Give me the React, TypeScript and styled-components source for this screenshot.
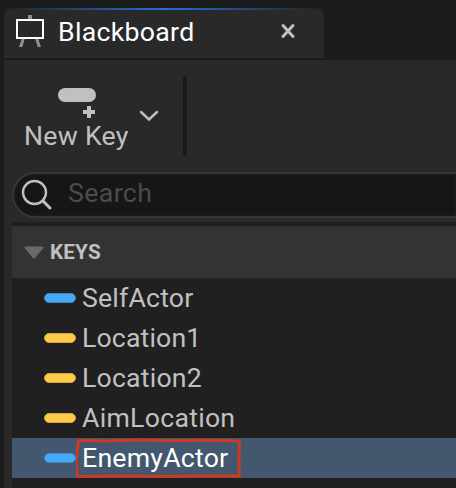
import React from "react";
import styled, { createGlobalStyle } from "styled-components";

const GlobalStyle = createGlobalStyle`
  * { box-sizing: border-box; }
  body { margin: 0; background: #1c1c1c; overflow: hidden; }
`;

const Window = styled.main`
  width: 456px;
  height: 488px;
  padding: 8px 0 0 4px;
  display: flex;
  flex-direction: column;
  overflow: hidden;
  background: #1c1c1c;
  color: #c0c0c0;
  font: 400 26.67px/40px Roboto, sans-serif;
`;

const Tab = styled.header`
  flex: none;
  width: 320px;
  height: 50px;
  margin-bottom: 2px;
  padding: 0 28px 2px 11px;
  display: flex;
  align-items: center;
  border-radius: 8px 8px 0 0;
  background:
    linear-gradient(90deg, #242424 1%, #1d4468 20%, #2a6cd6 50%, #1d4468 80%, #242424 98%) top / 100% 2px no-repeat,
    #292929;
  color: #fff;
`;

const BoardIcon = styled.svg`
  flex: none;
  margin-bottom: 4px;
`;

const Label = styled.span<{ $spacing?: number }>`
  white-space: nowrap;
  letter-spacing: ${(p) => p.$spacing ?? 0}px;
`;

const TabTitle = styled(Label)`
  flex: 1;
  margin-left: 13px;
`;

const IconButton = styled.button`
  display: flex;
  padding: 0;
  border: 0;
  background: none;
  color: #c0c0c0;
`;

const CloseButton = styled(IconButton)`
  margin-bottom: 3px;
`;

const Panel = styled.section`
  flex: 1;
  padding-left: 8px;
  display: flex;
  flex-direction: column;
  background: #292929;
`;

const Toolbar = styled.div`
  flex: none;
  height: 112px;
  padding: 16px 0 16px 12px;
  display: flex;
  align-items: stretch;
`;

const NewKey = styled.button`
  width: 105px;
  padding: 12px 0 0;
  display: flex;
  flex-direction: column;
  align-items: flex-start;
  border: 0;
  background: none;
  color: inherit;
  font: inherit;
  line-height: 36px;

  svg { margin-left: 33px; flex: none; }
`;

const Chevron = styled(IconButton)`
  margin-left: 10px;
  align-items: center;
`;

const Divider = styled.div`
  width: 4px;
  margin-left: 24px;
  background: #1b1b1b;
`;

const SearchBox = styled.label`
  flex: none;
  height: 46px;
  padding: 0 0 4px 7px;
  display: flex;
  align-items: center;
  border: 2px solid #363636;
  border-right: 0;
  border-radius: 23px 0 0 23px;
  background: #161616;
  box-shadow: inset 0 0 0 1px #1c1c1c;
  color: #4b4b4b;

  svg { margin: 4px 15px 0 0; }
`;

const Tree = styled.div`
  flex: 1;
  margin-top: 4px;
  border-top: 4px solid #1f1f1f;
  background: #202020;
`;

const TreeHeader = styled.div`
  height: 52px;
  padding-left: 12px;
  display: flex;
  align-items: center;
  gap: 6px;
  background: #333;
  font-size: 20.7px;
  font-weight: 700;
`;

const Row = styled.div<{ $selected?: boolean }>`
  position: relative;
  height: 40px;
  padding-left: 32px;
  display: flex;
  align-items: center;
  gap: 6px;
  background: ${(p) => (p.$selected ? "#43586e" : "transparent")};
  color: ${(p) => (p.$selected ? "#fff" : "#c0c0c0")};
`;

const Pill = styled.i<{ $color: string; $edge: string }>`
  width: 32px;
  height: 10px;
  border: 1px solid ${(p) => p.$edge};
  border-radius: 5px;
  background: ${(p) => p.$color};
`;

const Annotation = styled.svg`
  position: absolute;
  left: 64px;
  top: 0;
`;

const blue = { $color: "#48a7f7", $edge: "#3c88c8" };
const gold = { $color: "#ffca47", $edge: "#cfa53d" };

const keys = [
  { name: "SelfActor", pill: blue, spacing: 0.18 },
  { name: "Location1", pill: gold, spacing: 0.15 },
  { name: "Location2", pill: gold, spacing: 0.2 },
  { name: "AimLocation", pill: gold, spacing: 0.27 },
  { name: "EnemyActor", pill: blue, spacing: 0.23, selected: true },
];

export default function App() {
  return (
    <Window>
      <GlobalStyle />
      <Tab>
        <BoardIcon width="30" height="34" viewBox="0 0 30 34">
          <path d="M13 2h4v4h-4zM6.700 26H9.700L7.300 34H4zM20.300 26H23.300L26 34H22.700z" fill="#8f8f8f" />
          <rect x="2" y="7" width="26" height="18" fill="none" stroke="#fff" strokeWidth="2" />
        </BoardIcon>
        <TabTitle $spacing={0.3}>Blackboard</TabTitle>
        <CloseButton aria-label="Close">
          <svg width="16" height="16" viewBox="0 0 16 16">
            <path d="M3 2.500l10 11M13 2.500L3 13.500" stroke="#c0c0c0" strokeWidth="3" strokeLinecap="round" />
          </svg>
        </CloseButton>
      </Tab>
      <Panel>
        <Toolbar>
          <NewKey>
            <svg width="40" height="30" viewBox="0 0 40 30">
              <rect x="1" y="0" width="38" height="14" rx="7" fill="#c0c0c0" />
              <path d="M30 18h4v4h4v4h-4v4h-4v-4h-4v-4h4z" fill="#c0c0c0" />
            </svg>
            <Label $spacing={0.28}>New Key</Label>
          </NewKey>
          <Chevron aria-label="More key options">
            <svg width="20" height="12" viewBox="0 0 20 12">
              <path d="M2 2l8 7.5L18 2" fill="none" stroke="#c0c0c0" strokeWidth="2.4" strokeLinecap="round" />
            </svg>
          </Chevron>
          <Divider />
        </Toolbar>
        <SearchBox>
          <svg width="32" height="32" viewBox="0 0 32 32" fill="none" stroke="#c0c0c0" strokeLinecap="round">
            <circle cx="13.5" cy="13.5" r="11.5" strokeWidth="2.4" />
            <path d="M22 22l7 7" strokeWidth="3" />
          </svg>
          <Label $spacing={0.4}>Search</Label>
        </SearchBox>
        <Tree>
          <TreeHeader>
            <svg width="20" height="13" viewBox="0 0 20 13">
              <path d="M1.5 1.5h17L10 11.5z" fill="#696969" stroke="#696969" strokeWidth="2" strokeLinejoin="round" />
            </svg>
            <Label $spacing={0.15}>KEYS</Label>
          </TreeHeader>
          {keys.map((k) => (
            <Row key={k.name} $selected={k.selected}>
              <Pill {...k.pill} />
              <Label $spacing={k.spacing}>{k.name}</Label>
              {k.selected && (
                <Annotation width="168" height="44" viewBox="0 0 168 44">
                  <path
                    d="M2.500 2.500L30 3l30-1 30 .8 40-.5 33.500.7-.5 18 .2 17-30-.2-40 .8-40-.5-51.500.3-1.500-9 .5-12z"
                    fill="none" stroke="#cb3a23" strokeWidth="3" strokeLinejoin="round"
                  />
                </Annotation>
              )}
            </Row>
          ))}
        </Tree>
      </Panel>
    </Window>
  );
}
